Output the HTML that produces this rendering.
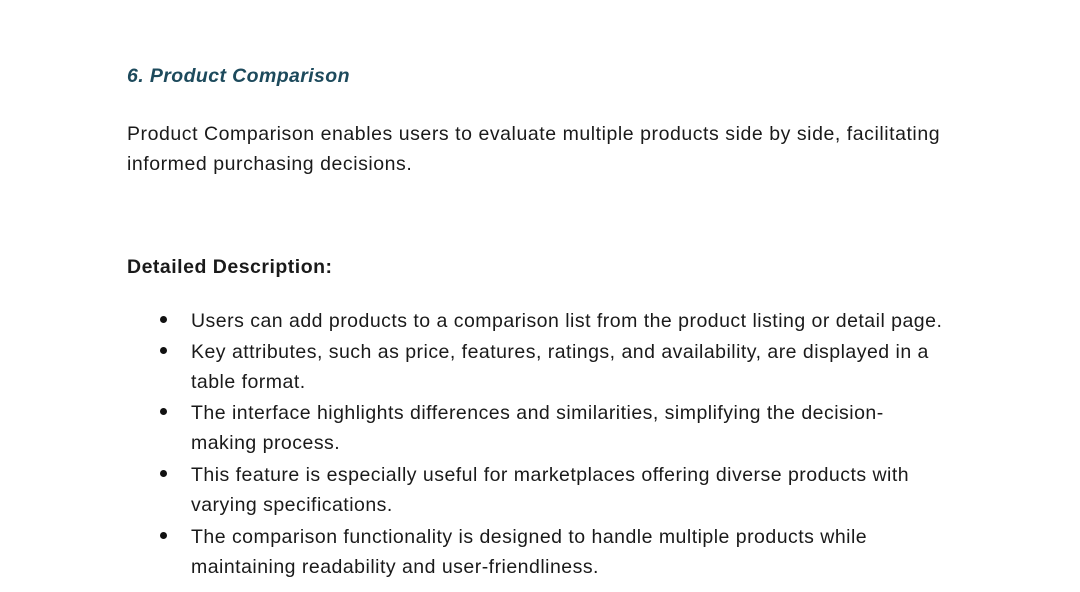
<!DOCTYPE html>
<html><head><meta charset="utf-8"><style>
html,body{margin:0;padding:0;background:#fff;width:1080px;height:592px;overflow:hidden}
body{font-family:"Liberation Sans",sans-serif;color:#1a1a1a;position:relative}
.l{position:absolute;white-space:nowrap;font-size:19.5px;line-height:22px;letter-spacing:0.55px}
.u{letter-spacing:0.48px}
.h{color:#1d4a5c;font-weight:bold;font-style:italic;font-size:19.5px;letter-spacing:0.4px}
.b{font-weight:bold;letter-spacing:0.5px}
.d{position:absolute;width:7px;height:7px;border-radius:50%;background:#111}
</style></head><body>
<div class="l h" style="left:127px;top:65px">6. Product Comparison</div>
<div class="l" style="left:127px;top:123px">Product Comparison enables users to evaluate multiple products side by side, facilitating</div>
<div class="l" style="left:127px;top:153px">informed purchasing decisions.</div>
<div class="l b" style="left:127px;top:256px">Detailed Description:</div>

<div class="d" style="left:160px;top:316px"></div>
<div class="l u" style="left:191px;top:310px">Users can add products to a comparison list from the product listing or detail page.</div>
<div class="d" style="left:160px;top:347px"></div>
<div class="l u" style="left:191px;top:341px">Key attributes, such as price, features, ratings, and availability, are displayed in a</div>
<div class="l u" style="left:191px;top:371px">table format.</div>
<div class="d" style="left:160px;top:408px"></div>
<div class="l u" style="left:191px;top:402px">The interface highlights differences and similarities, simplifying the decision-</div>
<div class="l u" style="left:191px;top:432px">making process.</div>
<div class="d" style="left:160px;top:470px"></div>
<div class="l u" style="left:191px;top:464px">This feature is especially useful for marketplaces offering diverse products with</div>
<div class="l u" style="left:191px;top:494px">varying specifications.</div>
<div class="d" style="left:160px;top:532px"></div>
<div class="l u" style="left:191px;top:526px">The comparison functionality is designed to handle multiple products while</div>
<div class="l u" style="left:191px;top:556px">maintaining readability and user-friendliness.</div>
</body></html>
